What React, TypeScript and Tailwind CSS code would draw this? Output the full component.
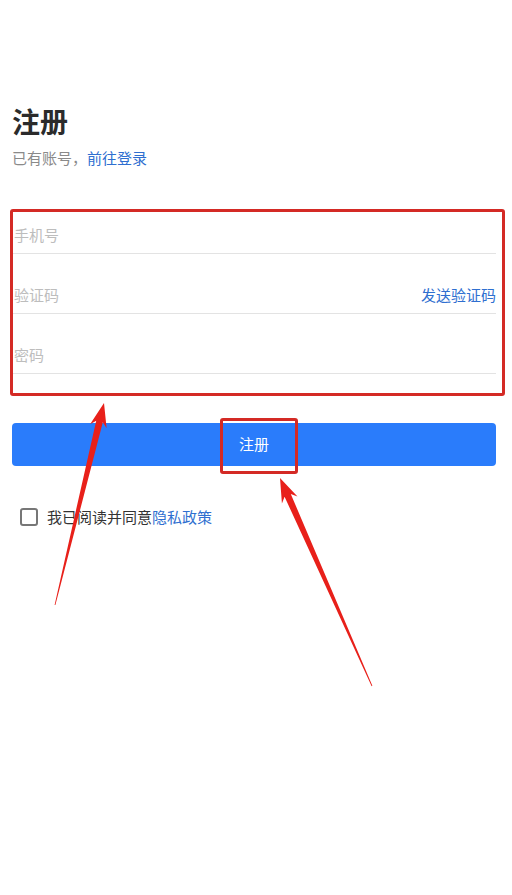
import React from "react"

const font = { fontFamily: '"Noto Sans CJK SC", "Noto Sans", sans-serif' }

function arrowPoints(tx: number, ty: number, sx: number, sy: number) {
  const dx = tx - sx
  const dy = ty - sy
  const len = Math.hypot(dx, dy)
  const ux = dx / len
  const uy = dy / len
  const nx = -uy
  const ny = ux
  const headLen = 24
  const headHalf = 8.5
  const notch = 19
  const bx = tx - ux * headLen
  const by = ty - uy * headLen
  const cx = tx - ux * notch
  const cy = ty - uy * notch
  const pts = [
    [tx, ty],
    [bx + nx * headHalf, by + ny * headHalf],
    [cx + nx * 3.4, cy + ny * 3.4],
    [sx + nx * 0.4, sy + ny * 0.4],
    [sx - nx * 0.4, sy - ny * 0.4],
    [cx - nx * 3.4, cy - ny * 3.4],
    [bx - nx * headHalf, by - ny * headHalf],
  ]
  return pts.map((p) => p.join(",")).join(" ")
}

function Field({ placeholder, action }: { placeholder: string; action?: string }) {
  return (
    <div className="flex h-[40px] items-center justify-between border-b border-[#e3e3e3] pl-[2px] pt-[4px]">
      <span className="text-[15px] text-[#bdbdbd]">{placeholder}</span>
      {action && <span className="text-[15px] text-[#2f6fd0]">{action}</span>}
    </div>
  )
}

export default function App() {
  return (
    <div className="relative min-h-[895px] w-[512px] bg-white" style={font}>
      <div className="pl-[12px] pr-[16px] pt-[103px]">
        <h1 className="text-[28px] font-bold leading-[36px] text-[#2b2b2b]">注册</h1>
        <p className="mt-[8px] text-[15px] leading-[22px] text-[#8a8a8a]">
          已有账号，<span className="text-[#2f6fd0]">前往登录</span>
        </p>

        {/* form */}
        <div className="mt-[45px] flex flex-col gap-[20px]">
          <Field placeholder="手机号" />
          <Field placeholder="验证码" action="发送验证码" />
          <Field placeholder="密码" />
        </div>

        <button className="mt-[49px] flex h-[43px] w-full items-center justify-center rounded-[4px] bg-[#2a7cfb] text-[15px] text-white">
          注册
        </button>

        <div className="ml-[8px] mt-[40px] flex h-[22px] items-center">
          <span className="h-[18px] w-[18px] rounded-[3px] border-2 border-[#777]" />
          <span className="ml-[9px] text-[15px] text-[#333]">
            我已阅读并同意<span className="text-[#2f6fd0]">隐私政策</span>
          </span>
        </div>
      </div>

      {/* annotations */}
      <div className="pointer-events-none absolute left-[10px] top-[209px] h-[187px] w-[495px] rounded-[3px] border-[3px] border-[#d42a25]" />
      <div className="pointer-events-none absolute left-[220px] top-[418px] h-[56px] w-[78px] rounded-[3px] border-[3px] border-[#d42a25]" />
      <svg className="pointer-events-none absolute left-0 top-0" width="512" height="895">
        <polygon points={arrowPoints(104, 403, 55, 605)} fill="#e8201a" />
        <polygon points={arrowPoints(280, 478, 372, 686)} fill="#e8201a" />
      </svg>
    </div>
  )
}
